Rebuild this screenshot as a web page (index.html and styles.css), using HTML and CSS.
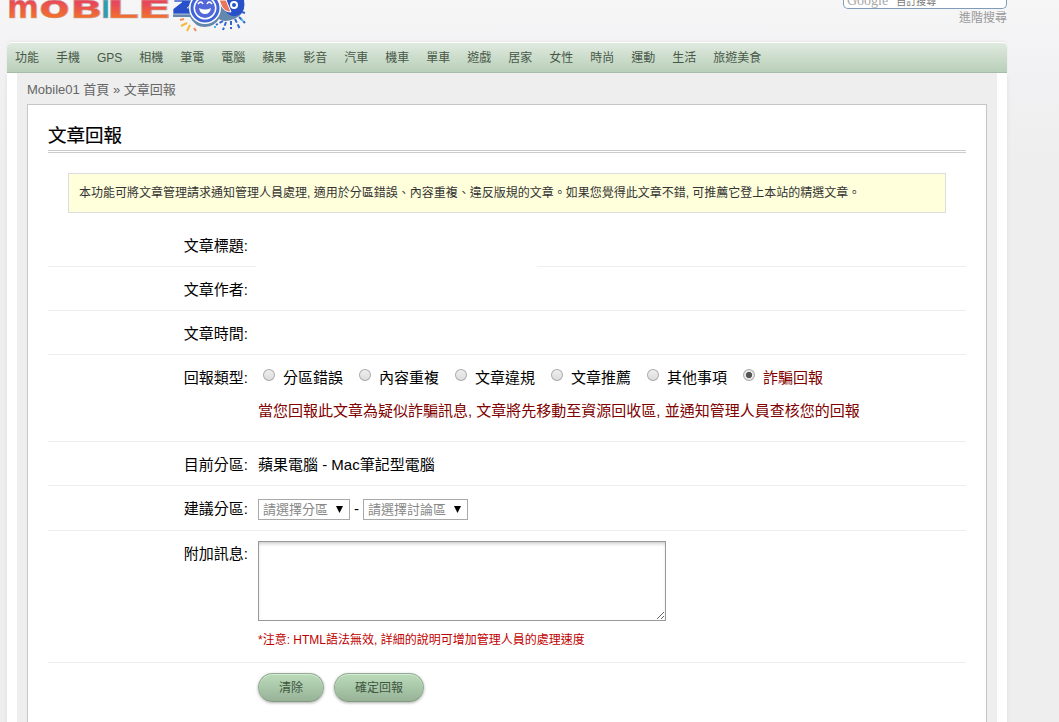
FILE: index.html
```html
<!DOCTYPE html>
<html lang="zh-Hant">
<head>
    <meta charset="UTF-8">
    <title>文章回報 - Mobile01</title>
    <link rel="stylesheet" href="styles.css">
</head>
<body>
    <div id="wrap">
        <div class="header">
            <svg class="logo" width="250" height="36" viewBox="0 0 250 36" role="img" aria-label="Mobile01">
                <defs>
                    <linearGradient id="orange" x1="0" y1="0" x2="0" y2="1">
                        <stop offset="0.3" stop-color="#e8475a"/>
                        <stop offset="0.9" stop-color="#f47b20"/>
                    </linearGradient>
                </defs>
                <g class="logo-text" fill="url(#orange)">
                    <text class="small" x="0" y="18" textLength="32" lengthAdjust="spacingAndGlyphs">m</text>
                    <text class="small" x="32" y="18" textLength="31" lengthAdjust="spacingAndGlyphs">o</text>
                    <text x="63" y="18" textLength="33" lengthAdjust="spacingAndGlyphs">B</text>
                    <text x="94" y="18" textLength="9" lengthAdjust="spacingAndGlyphs" fill="#2c9db5">I</text>
                    <text x="99" y="18" textLength="33" lengthAdjust="spacingAndGlyphs">L</text>
                    <text x="130" y="18" textLength="35" lengthAdjust="spacingAndGlyphs">E</text>
                </g>
                <!-- mascot and fireworks -->
                <path d="M166 12v5h17q5 10 15 10 10-1 14-8 5 4 15 0 8-3 10-11l-4-6h-40z" fill="#6487ad"/>
                <path d="M167 0h22l-9 8h8v6h-22v-5l9-7h-8z" fill="#2850c8" stroke="#fff" stroke-width="0.6"/>
                <path d="M220 0h17q2 11-5 15-9 4-15-6z" fill="#2850c8"/>
                <path d="M212 0h7l5 12q-6 0-9-5z" fill="#ec765b" stroke="#fff"/>
                <circle cx="227" cy="5" r="4" fill="#fff"/>
                <circle cx="227" cy="5" r="2" fill="#2850c8"/>
                <circle cx="198" cy="8" r="16" fill="#fff"/>
                <circle cx="198" cy="8" r="13" fill="#fff" stroke="#3e64d7" stroke-width="3"/>
                <circle cx="198" cy="8" r="10" fill="#5368d8"/>
                <path d="M192 8q6 3 12 0-1 6-6 6t-6-6" fill="#fff"/>
                <path d="M191 4q3-4 5 0M200 4q2-4 5 0" fill="none" stroke="#fff" stroke-width="1.5"/>
                <g fill="none" stroke-width="2">
                    <path d="M180 23l-6 3M183 25l-3 6" stroke="#f6ba3b"/>
                    <path d="M173 20l4-1M187 28l2 3" stroke="#f48c55"/>
                    <path d="M216 21l-7 4M219 22l-3 8M224 21v8M228 19l5 10M232 17l6 6M235 12l3 1" stroke="#3264ce" stroke-dasharray="4 2"/>
                    <path d="M234 19l2 2M207 27h2" stroke="#3ebce4"/>
                </g>
            </svg>
            <div class="search">
                <div class="search-box"><span class="google">Google</span><span class="search-label">自訂搜尋</span></div>
                <a class="advanced">進階搜尋</a>
            </div>
        </div>

        <ul class="menu">
            <li>功能</li>
            <li>手機</li>
            <li>GPS</li>
            <li>相機</li>
            <li>筆電</li>
            <li>電腦</li>
            <li>蘋果</li>
            <li>影音</li>
            <li>汽車</li>
            <li>機車</li>
            <li>單車</li>
            <li>遊戲</li>
            <li>居家</li>
            <li>女性</li>
            <li>時尚</li>
            <li>運動</li>
            <li>生活</li>
            <li>旅遊美食</li>
        </ul>

        <div class="container">
            <div class="content">
                <p class="nav">Mobile01 首頁 » 文章回報</p>
                <div class="box">
                    <h2>文章回報</h2>
                    <div class="notice">本功能可將文章管理請求通知管理人員處理, 適用於分區錯誤、內容重複、違反版規的文章。如果您覺得此文章不錯, 可推薦它登上本站的精選文章。</div>
                    <form>
                        <div class="row">
                            <div class="label">文章標題:</div>
                            <div class="value"><div class="topic"></div></div>
                        </div>
                        <div class="row">
                            <div class="label">文章作者:</div>
                            <div class="value"></div>
                        </div>
                        <div class="row">
                            <div class="label">文章時間:</div>
                            <div class="value"></div>
                        </div>
                        <div class="row row-type">
                            <div class="label">回報類型:</div>
                            <div class="value">
                                <div class="types">
                                    <label><input type="radio" name="type">分區錯誤</label>
                                    <label><input type="radio" name="type">內容重複</label>
                                    <label><input type="radio" name="type">文章違規</label>
                                    <label><input type="radio" name="type">文章推薦</label>
                                    <label><input type="radio" name="type">其他事項</label>
                                    <label class="scam"><input type="radio" name="type" checked>詐騙回報</label>
                                </div>
                                <p class="scam">當您回報此文章為疑似詐騙訊息, 文章將先移動至資源回收區, 並通知管理人員查核您的回報</p>
                            </div>
                        </div>
                        <div class="row">
                            <div class="label">目前分區:</div>
                            <div class="value">蘋果電腦 - Mac筆記型電腦</div>
                        </div>
                        <div class="row row-forum">
                            <div class="label">建議分區:</div>
                            <div class="value selects">
                                <select class="category"><option>請選擇分區</option></select>
                                <span>-</span>
                                <select class="forum"><option>請選擇討論區</option></select>
                            </div>
                        </div>
                        <div class="row row-message">
                            <div class="label">附加訊息:</div>
                            <div class="value">
                                <textarea name="message"></textarea>
                                <p class="hint">*注意: HTML語法無效, 詳細的說明可增加管理人員的處理速度</p>
                            </div>
                        </div>
                        <div class="buttons">
                            <button type="reset">清除</button>
                            <button type="button">確定回報</button>
                        </div>
                    </form>
                </div>
            </div>
        </div>
    </div>
</body>
</html>
```
FILE: styles.css
```css
* { box-sizing: border-box; }
html { height: 100%; overflow: hidden; }
body { height: 722px; margin: 0; overflow: hidden; font-family: "Liberation Sans", "Noto Sans CJK TC", sans-serif; font-size: 15px; color: #000; white-space: nowrap; background: #eee linear-gradient(#f6f6f7, #f1f1f3 80px, #eee 170px) no-repeat; }
p, h2, ul { margin: 0; padding: 0; }
#wrap { width: 1000px; margin-left: 7px; }

.header { display: flex; justify-content: space-between; height: 42px; }
.logo { display: block; }
.logo-text { font: bold 25px "DejaVu Sans", sans-serif; stroke: #c9a7a5; stroke-width: 0.5px; }
.logo-text .small { font-size: 32px; }
.search { width: 164px; color: #999; font-size: 12px; text-align: right; }
.search-box { display: flex; align-items: flex-end; height: 9px; padding-left: 3px; border: 1px solid #7f9db9; border-top: 0; border-radius: 0 0 5px 5px; background: #fff; overflow: hidden; }
.google { font: 14px/16px "Liberation Serif", serif; color: #aaa; margin-bottom: -1px; }
.search-label { font-size: 10px; line-height: 14px; color: #777; margin: 0 0 -1px 8px; }
.advanced { display: block; line-height: 19px; }

.menu { display: flex; height: 31px; border-top: 1px solid #fff; border-bottom: 1px solid #a6b9a7; border-radius: 5px 5px 0 0; background: linear-gradient(#dfeadf, #b9cfb9); list-style: none; font-size: 12px; line-height: 30px; color: #485848; box-shadow: 0 -1px 2px #e5e5e5; }
.menu li { padding: 0 9.1px 0 7.9px; }

.container { height: 660px; padding: 0 10px; background: #fff; box-shadow: 0 3px 4px #ddd; }
.content { height: 100%; padding: 0 10px; background: #eee; }
.nav { height: 31px; font-size: 13px; line-height: 33px; color: #666; }
.box { height: 640px; padding: 20px; border: 1px solid #c6c6c6; background: #fff; }
h2 { height: 28px; font-size: 18.5px; line-height: 22px; font-weight: normal; -webkit-text-stroke: 0.2px; border-bottom: 3px double #ccc; }
.notice { height: 40px; margin: 20px 20px 10px; padding-left: 10px; border: 1px solid #ddd; background: #ffffdc; color: #333; font-size: 12px; line-height: 39px; }

.row { display: flex; gap: 10px; height: 44px; border-bottom: 1px solid #eee; line-height: 46px; }
.label { width: 200px; text-align: right; }
.value { flex: 1; }
.topic { width: 281px; height: 44px; margin-left: -2px; background: #fff; }
.row-type { height: 87px; }
.row-forum { height: 45px; }
.row-message { height: 132px; }

.types { display: flex; gap: 16px; padding-left: 5px; }
.types label { display: flex; width: 80px; }
input { appearance: none; width: 12px; height: 12px; margin: 14px 8px 0 0; border: 1px solid #aaa; border-radius: 50%; background: linear-gradient(#eee, #ddd); }
input:checked { background: radial-gradient(#555 0 2.8px, #e6e6e6 3.4px); }
.scam { color: #800000; }
.types + .scam { line-height: 24px; margin-top: -2px; }

.selects { display: flex; align-items: flex-start; gap: 4px; }
select { appearance: none; height: 21px; margin-top: 13px; padding: 0 0 0 4px; border: 1px solid #a9a9a9; border-radius: 0; background: #fff url("data:image/svg+xml,%3Csvg xmlns='http://www.w3.org/2000/svg' width='7' height='7'%3E%3Cpath d='M0 0h7L3.5 7z'/%3E%3C/svg%3E") no-repeat right 6px center; color: #888; font: 13px/19px "Liberation Sans", "Noto Sans CJK TC", sans-serif; }
.category { width: 92px; }
.forum { width: 105px; }

textarea { display: block; width: 408px; height: 80px; margin-top: 10px; border: 1px solid #999; box-shadow: inset 0 3px 4px -2px #bbb; }
.hint { color: #c00000; font-size: 12px; line-height: 38px; }

.buttons { display: flex; gap: 10px; padding: 10px 0 0 210px; }
button { height: 29px; padding: 0 20px; border: 1px solid #93ac93; border-bottom-color: #819b81; border-radius: 15px; background: linear-gradient(#badbba, #98b398); box-shadow: 0 1px 3px #aaa, inset 0 1px #d4ead4; color: #405640; font: 12px/26px "Liberation Sans", "Noto Sans CJK TC", sans-serif; }
button:first-child { width: 66px; }
button:last-child { width: 90px; }
```
